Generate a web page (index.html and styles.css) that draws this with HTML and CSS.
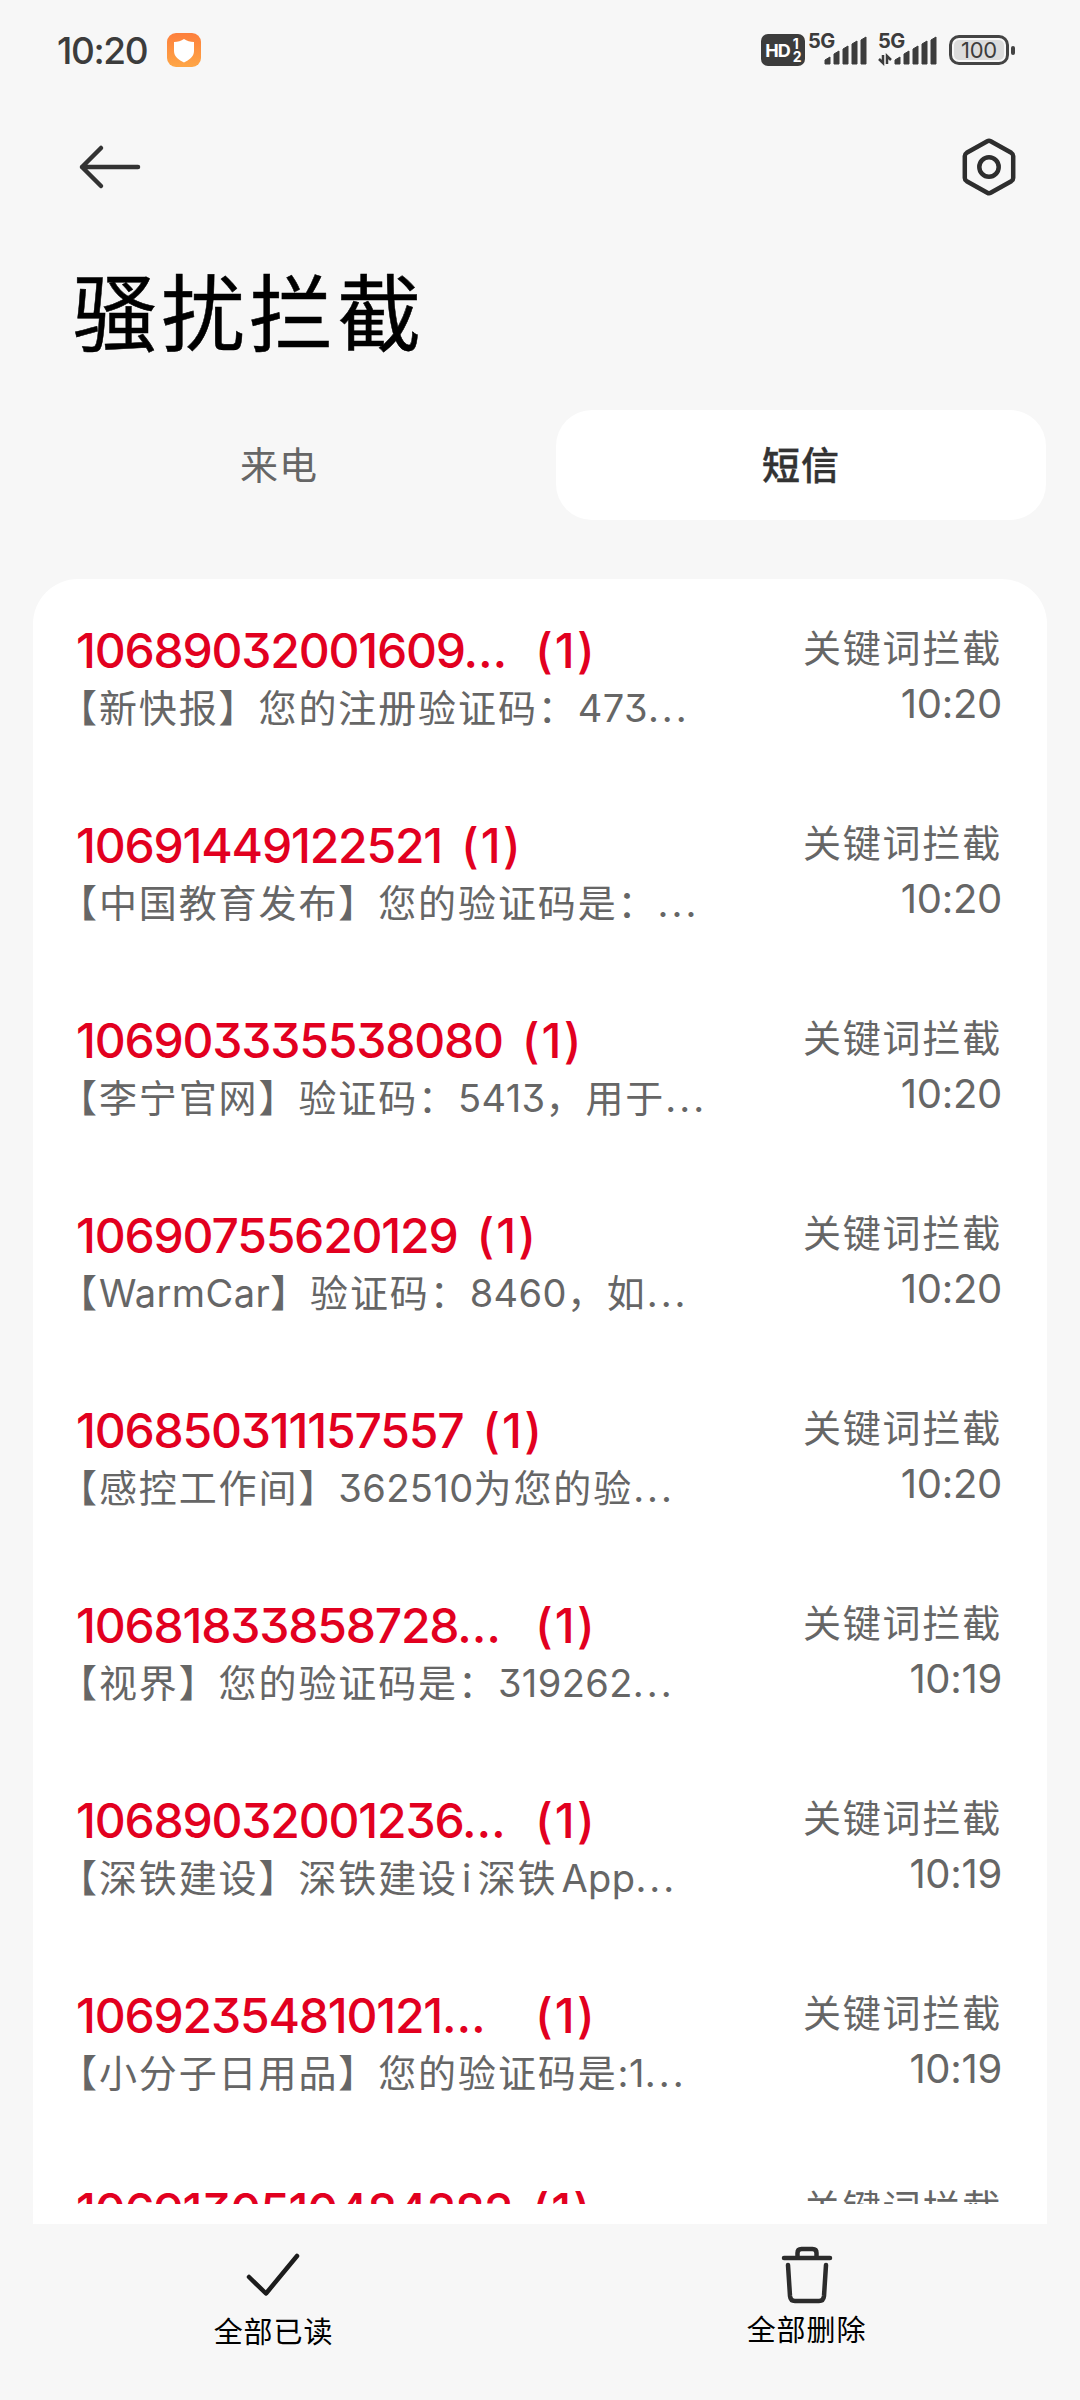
FILE: index.html
```html
<!DOCTYPE html>
<html lang="zh-CN">
  <head>
    <meta charset="UTF-8" />
    <meta name="viewport" content="width=device-width, initial-scale=1.0" />
    <title>骚扰拦截</title>
    <link rel="stylesheet" href="styles.css">
  </head>
  <body>
    <!-- Status bar -->
    <div class="status-bar">
      <span class="clock">10:20</span>
      <svg class="app-icon" width="34" height="34" viewBox="0 0 34 34">
        <defs>
          <linearGradient id="orange" x1="0" y1="0" x2="0" y2="1">
            <stop offset="0" stop-color="#fd7f3c" />
            <stop offset="1" stop-color="#fea646" />
          </linearGradient>
        </defs>
        <rect width="34" height="34" rx="9" fill="url(#orange)" />
        <path d="M17 6 C20 8 23 9 27 9 V18 C27 24 22 27 17 29.500 C12 27 7 24 7 18 V9 C11 9 14 8 17 6Z" fill="#fff" />
      </svg>
      <div class="status-icons">
        <div class="hd"><b>HD</b><span class="sims"><i>1</i><i>2</i></span></div>
        <div class="signal">
          <span>5G</span>
          <svg width="60" height="34" viewBox="0 0 60 34" fill="#3c3c3c">
            <path d="M17 31V27L22 24V31ZM26 31V21L31 18V31ZM35 31V16L40 13V31ZM44 31V11L49 8V31ZM53 31V7L58 4V31Z" stroke="#3c3c3c" stroke-linejoin="round" />
          </svg>
        </div>
        <div class="signal">
          <span>5G</span>
          <svg width="60" height="34" viewBox="0 0 60 34" fill="#3c3c3c">
            <path d="M17 31V27L22 24V31ZM26 31V21L31 18V31ZM35 31V16L40 13V31ZM44 31V11L49 8V31ZM53 31V7L58 4V31Z" stroke="#3c3c3c" stroke-linejoin="round" />
            <path d="M5 22V30L1 26M9 31V23L13 27" fill="none" stroke="#3c3c3c" stroke-width="2.500" />
          </svg>
        </div>
        <div class="battery"><span>100</span></div>
      </div>
    </div>

    <!-- Top bar -->
    <div class="top-bar">
      <svg width="64" height="48" viewBox="0 0 64 48" fill="none" stroke="#333" stroke-width="4.500" stroke-linecap="round" stroke-linejoin="round">
        <path d="M23 5 L4 24 L23 43 M4 24 H60" />
      </svg>
      <svg width="60" height="60" viewBox="0 0 60 60" fill="none" stroke="#2e2e2e" stroke-width="4.500" stroke-linejoin="round">
        <path d="M28.300 4.200 Q30 3.200 31.700 4.200 L52.300 15.800 Q54.200 17 54.200 19 V41 Q54.200 43 52.300 44.200 L31.700 55.800 Q30 56.800 28.300 55.800 L7.700 44.200 Q5.800 43 5.800 41 V19 Q5.800 17 7.700 15.800Z" />
        <circle cx="30" cy="30" r="9.700" />
      </svg>
    </div>

    <h1>骚扰拦截</h1>

    <div class="tabs">
      <div class="tab">来电</div>
      <div class="tab active">短信</div>
    </div>

    <!-- Blocked messages -->
    <div class="card">
      <ul class="list">
        <li>
          <div class="main">
            <div class="number"><span class="num">10689032001609…</span><span class="count">(1)</span></div>
            <p>【新快报】您的注册验证码：<span>473</span><span class="dots">...</span></p>
          </div>
          <div class="side">关键词拦截<time>10:20</time></div>
        </li>
        <li>
          <div class="main">
            <div class="number"><span>10691449122521</span><span class="count">(1)</span></div>
            <p>【中国教育发布】您的验证码是：<span class="dots">...</span></p>
          </div>
          <div class="side">关键词拦截<time>10:20</time></div>
        </li>
        <li>
          <div class="main">
            <div class="number"><span>106903335538080</span><span class="count">(1)</span></div>
            <p>【李宁官网】验证码：<span>5413</span>，用于<span class="dots">...</span></p>
          </div>
          <div class="side">关键词拦截<time>10:20</time></div>
        </li>
        <li>
          <div class="main">
            <div class="number"><span>10690755620129</span><span class="count">(1)</span></div>
            <p>【<span>WarmCar</span>】验证码：<span>8460</span>，如<span class="dots">...</span></p>
          </div>
          <div class="side">关键词拦截<time>10:20</time></div>
        </li>
        <li>
          <div class="main">
            <div class="number"><span>106850311157557</span><span class="count">(1)</span></div>
            <p>【感控工作间】<span>362510</span>为您的验<span class="dots">...</span></p>
          </div>
          <div class="side">关键词拦截<time>10:20</time></div>
        </li>
        <li>
          <div class="main">
            <div class="number"><span class="num">10681833858728…</span><span class="count">(1)</span></div>
            <p>【视界】您的验证码是：<span>319262</span><span class="dots">...</span></p>
          </div>
          <div class="side">关键词拦截<time>10:19</time></div>
        </li>
        <li>
          <div class="main">
            <div class="number"><span class="num">10689032001236…</span><span class="count">(1)</span></div>
            <p>【深铁建设】深铁建设<span class="latin">i</span>深铁<span class="latin">App</span><span class="dots">...</span></p>
          </div>
          <div class="side">关键词拦截<time>10:19</time></div>
        </li>
        <li>
          <div class="main">
            <div class="number"><span class="num">10692354810121…</span><span class="count">(1)</span></div>
            <p>【小分子日用品】您的验证码是<span>:1</span><span class="dots">...</span></p>
          </div>
          <div class="side">关键词拦截<time>10:19</time></div>
        </li>
        <li>
          <div class="main">
            <div class="number"><span>1069130510484282</span><span class="count">(1)</span></div>
          </div>
          <div class="side">关键词拦截</div>
        </li>
      </ul>
    </div>

    <!-- Bottom actions -->
    <div class="actions">
      <div class="action read">
        <svg width="60" height="60" viewBox="0 0 60 60" fill="none" stroke="#1c1c1c" stroke-width="4.500" stroke-linecap="round" stroke-linejoin="round">
          <path d="M5 33 L22 49.500 L53 12" />
        </svg>
        <span>全部已读</span>
      </div>
      <div class="action">
        <svg width="60" height="60" viewBox="0 0 60 60" fill="none" stroke="#2c2c2c" stroke-width="4.500" stroke-linecap="round" stroke-linejoin="round">
          <path d="M7 14 H53 M20.500 13 V9 Q20.500 5 24.500 5 H35.500 Q39.500 5 39.500 9 V13" />
          <path d="M11 21 L13 52 Q13.500 57 18 57 H42 Q46.500 57 47 52 L49 21" />
        </svg>
        <span>全部删除</span>
      </div>
    </div>
  </body>
</html>
```

FILE: styles.css
```css
* {
  box-sizing: border-box;
}

body {
  margin: 0;
  height: 2400px;
  overflow: hidden;
  background: #f7f7f7;
  font-family: Inter, "Noto Sans CJK SC", sans-serif;
  font-feature-settings: "cv09";
}

.status-bar {
  display: flex;
  align-items: center;
  height: 100px;
  padding: 0 65px 0 57px;
  color: #3c3c3c;
}

.clock {
  width: 110px;
  font-size: 37px;
  font-weight: 500;
  letter-spacing: -1.4px;
}

.status-icons {
  display: flex;
  align-items: center;
  margin-left: auto;
}

.hd {
  display: flex;
  align-items: center;
  justify-content: center;
  gap: 3px;
  width: 44px;
  height: 32px;
  margin-right: 3px;
  border-radius: 7px;
  background: #3c3c3c;
  color: #fff;
  font-size: 18px;
  letter-spacing: -1px;
}

.sims {
  display: flex;
  flex-direction: column;
  font-size: 14px;
  font-weight: 700;
  line-height: 13px;
}

.sims i {
  font-style: normal;
}

.signal {
  position: relative;
  width: 60px;
  height: 34px;
  margin-right: 10px;
}

.signal + .signal {
  margin-right: 11px;
}

.signal span {
  position: absolute;
  top: -2px;
  left: 0;
  font-size: 20px;
  font-weight: 700;
  line-height: 20px;
  letter-spacing: -0.5px;
}

.battery {
  position: relative;
  width: 60px;
  height: 30px;
  margin-right: 6px;
  padding: 2px;
  border: 3px solid #444;
  border-radius: 10px;
}

.battery span {
  display: block;
  border-radius: 5px;
  background: #dcdcdc;
  font-size: 22px;
  line-height: 20px;
  text-align: center;
  letter-spacing: -0.3px;
}

.battery::after {
  content: "";
  position: absolute;
  top: 8px;
  right: -9px;
  width: 4px;
  height: 9px;
  border-radius: 2px;
  background: #444;
}

.top-bar {
  display: flex;
  align-items: center;
  justify-content: space-between;
  height: 134px;
  padding: 0 61px 0 78px;
}

h1 {
  height: 176px;
  margin: 0;
  padding-left: 73px;
  color: #000;
  font-size: 84px;
  font-weight: 400;
  line-height: 161px;
  letter-spacing: 4px;
  -webkit-text-stroke: 0.5px #000;
}

.tabs {
  display: flex;
  height: 110px;
  margin: 0 34px 59px 34px;
}

.tab {
  flex: 1;
  margin-right: 32px;
  border-radius: 36px;
  color: #666;
  font-size: 38px;
  line-height: 110px;
  text-align: center;
  letter-spacing: 1px;
}

.tab.active {
  margin-right: 0;
  background: #fff;
  color: #333;
  font-weight: 500;
  -webkit-text-stroke: 0.4px #333;
}

.card {
  height: 1645px;
  margin: 0 33px;
  padding-bottom: 20px;
  border-radius: 45px 45px 0 0;
  background: #fff;
}

.list {
  height: 1625px;
  margin: 0;
  padding: 0;
  overflow: hidden;
  list-style: none;
}

.list li {
  display: flex;
  justify-content: space-between;
  height: 195px;
  padding: 42px 45px 0 43px;
}

.number {
  display: flex;
  gap: 19px;
  height: 59px;
  color: #e2001f;
  font-size: 48px;
  font-weight: 500;
  line-height: 59px;
  letter-spacing: -1.2px;
}

.number .num {
  width: 440px;
}

.number .count {
  letter-spacing: 2px;
}

.main p {
  margin: 0;
  color: #666;
  font-size: 38px;
  line-height: 56px;
  letter-spacing: 1.9px;
  text-indent: -17px;
  white-space: nowrap;
}

.main p span {
  letter-spacing: 0.4px;
}

.main p .latin {
  margin: 0 6px 0 4px;
}

.main p .dots {
  margin-left: 0;
  letter-spacing: 3px;
}

.main p .latin + .dots {
  margin-left: -6px;
}

.side {
  color: #666;
  font-size: 38px;
  line-height: 55px;
  letter-spacing: 1.8px;
  text-align: right;
}

.side time {
  display: block;
  font-size: 40px;
  letter-spacing: -0.3px;
}

.actions {
  display: flex;
  padding: 20px 7px 0;
}

.action {
  display: flex;
  flex: 1;
  flex-direction: column;
  align-items: center;
  color: #000;
  font-size: 29px;
  line-height: 54px;
  letter-spacing: 0.9px;
}

.action.read {
  line-height: 58px;
}
```
